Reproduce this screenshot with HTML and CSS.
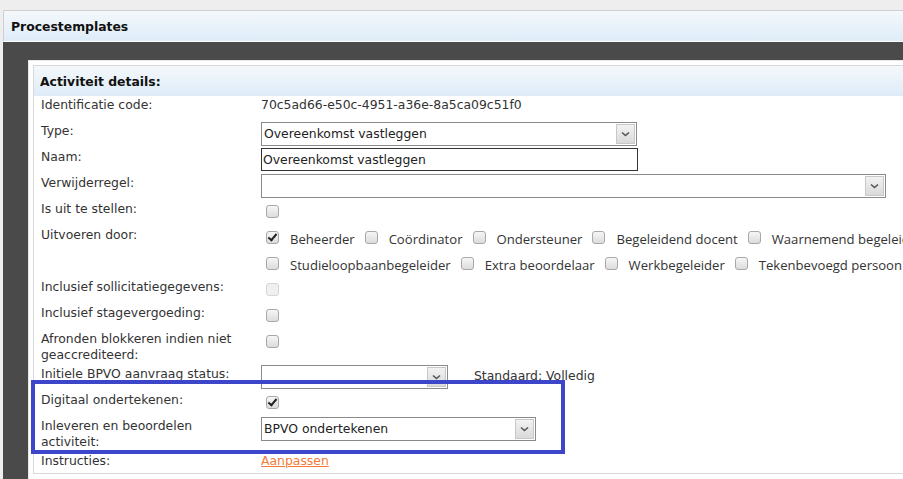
FILE: index.html
```html
<!DOCTYPE html>
<html lang="nl">

<head>
    <meta charset="UTF-8">
    <meta name="viewport" content="width=device-width, initial-scale=1.0">
    <title>Procestemplates</title>
    <link rel="stylesheet" href="styles.css">
</head>

<body>
    <div class="topbar">Procestemplates</div>
    <div class="stage">
        <div class="card">
            <div class="box">
                <div class="box-head">Activiteit details:</div>
                <div class="fields">
                    <div class="row">
                        <div class="lbl">Identificatie code:</div>
                        <div class="val">70c5ad66-e50c-4951-a36e-8a5ca09c51f0</div>
                    </div>
                    <div class="row">
                        <div class="lbl">Type:</div>
                        <div class="select w376"><span class="sel-text">Overeenkomst vastleggen</span><span class="sel-btn"><svg width="9" height="6" viewBox="0 0 9 6"><path d="M1 1.5 L4.5 4.5 L8 1.5" fill="none" stroke="#555" stroke-width="1.6"/></svg></span></div>
                    </div>
                    <div class="row">
                        <div class="lbl">Naam:</div>
                        <div class="input">Overeenkomst vastleggen</div>
                    </div>
                    <div class="row">
                        <div class="lbl">Verwijderregel:</div>
                        <div class="select w625"><span class="sel-text"></span><span class="sel-btn"><svg width="9" height="6" viewBox="0 0 9 6"><path d="M1 1.5 L4.5 4.5 L8 1.5" fill="none" stroke="#555" stroke-width="1.6"/></svg></span></div>
                    </div>
                    <div class="row cbrow">
                        <div class="lbl">Is uit te stellen:</div>
                        <span class="cb"></span>
                    </div>
                    <div class="row">
                        <div class="lbl">Uitvoeren door:</div>
                        <div class="options">
                            <div class="opt-line">
                                <span class="cb checked"></span><span class="opt">Beheerder</span>
                                <span class="cb"></span><span class="opt">Coördinator</span>
                                <span class="cb"></span><span class="opt">Ondersteuner</span>
                                <span class="cb"></span><span class="opt">Begeleidend docent</span>
                                <span class="cb"></span><span class="opt">Waarnemend begeleider</span>
                            </div>
                            <div class="opt-line">
                                <span class="cb"></span><span class="opt">Studieloopbaanbegeleider</span>
                                <span class="cb"></span><span class="opt">Extra beoordelaar</span>
                                <span class="cb"></span><span class="opt">Werkbegeleider</span>
                                <span class="cb"></span><span class="opt">Tekenbevoegd persoon</span>
                            </div>
                        </div>
                    </div>
                    <div class="row cbrow">
                        <div class="lbl">Inclusief sollicitatiegegevens:</div>
                        <span class="cb disabled"></span>
                    </div>
                    <div class="row cbrow">
                        <div class="lbl">Inclusief stagevergoeding:</div>
                        <span class="cb"></span>
                    </div>
                    <div class="row cbrow">
                        <div class="lbl">Afronden blokkeren indien niet geaccrediteerd:</div>
                        <span class="cb"></span>
                    </div>
                    <div class="row">
                        <div class="lbl">Initiele BPVO aanvraag status:</div>
                        <div class="select w187"><span class="sel-text"></span><span class="sel-btn"><svg width="9" height="6" viewBox="0 0 9 6"><path d="M1 1.5 L4.5 4.5 L8 1.5" fill="none" stroke="#555" stroke-width="1.6"/></svg></span></div>
                        <span class="hint">Standaard: Volledig</span>
                    </div>
                    <div class="highlight">
                        <div class="row cbrow">
                            <div class="lbl">Digitaal ondertekenen:</div>
                            <span class="cb checked"></span>
                        </div>
                        <div class="row">
                            <div class="lbl">Inleveren en beoordelen activiteit:</div>
                            <div class="select w275"><span class="sel-text">BPVO ondertekenen</span><span class="sel-btn"><svg width="9" height="6" viewBox="0 0 9 6"><path d="M1 1.5 L4.5 4.5 L8 1.5" fill="none" stroke="#555" stroke-width="1.6"/></svg></span></div>
                        </div>
                    </div>
                    <div class="row last">
                        <div class="lbl">Instructies:</div>
                        <a class="link" href="#">Aanpassen</a>
                    </div>
                </div>
            </div>
        </div>
    </div>
</body>

</html>
```

FILE: styles.css
```css
body {
    margin: 0;
    background-color: #eeeeee;
    font-family: "DejaVu Sans", Verdana, sans-serif;
    font-size: 12.4px;
    color: #333;
    overflow: hidden;
    height: 479px;
}

.topbar {
    margin: 10px 0 0 3px;
    height: 28px;
    line-height: 28px;
    padding: 2px 0 0 7px;
    border-top: 1px solid #cfcfcf;
    border-left: 1px solid #cfcfcf;
    border-bottom: 1px solid #fff;
    background: linear-gradient(#f4f8fb, #deecf8);
    font-weight: bold;
    color: #111;
}

.stage {
    margin-left: 3px;
    background-color: #4a4a4a;
    padding: 18px 0 0 25px;
    height: 500px;
}

.card {
    background-color: #fff;
    border-top: 1px solid #e8e8e8;
    border-left: 1px solid #e8e8e8;
    padding: 4px 0 20px 4px;
}

.box {
    border: 1px solid #d8d8d8;
    border-right: none;
    padding-bottom: 3px;
}

.box-head {
    height: 28px;
    line-height: 28px;
    padding: 2px 0 0 6px;
    background: linear-gradient(#f4f8fb, #deecf8);
    font-weight: bold;
    color: #111;
}

.fields {
    padding-left: 7px;
}

.row {
    display: flex;
    align-items: flex-start;
    min-height: 24px;
    padding: 0 0 2px;
}

.row.last {
    min-height: 18px;
    padding-bottom: 0;
}

.lbl {
    width: 200px;
    flex: none;
    padding-right: 20px;
    line-height: 16px;
    padding-top: 1px;
}

.val {
    line-height: 16px;
    padding-top: 1px;
}

.select {
    display: flex;
    height: 24px;
    box-sizing: border-box;
    border: 1px solid #8a8a8a;
    background: #fff;
}

.w376 { width: 376px; }
.w625 { width: 625px; }
.w187 { width: 187px; }
.w275 { width: 275px; }

.sel-text {
    flex: 1;
    line-height: 22px;
    padding-left: 2px;
    color: #222;
}

.sel-btn {
    width: 19px;
    margin: 1px;
    display: flex;
    align-items: center;
    justify-content: center;
    border: 1px solid #c8c8c8;
    background: linear-gradient(#f2f2f2, #dadada);
    box-sizing: border-box;
}

.input {
    width: 377px;
    height: 23px;
    box-sizing: border-box;
    border: 1px solid #333;
    line-height: 21px;
    padding-left: 1px;
    color: #222;
}

.cb {
    display: inline-block;
    flex: none;
    width: 13px;
    height: 13px;
    box-sizing: border-box;
    border: 1px solid #a8a8a8;
    border-radius: 3px;
    background: linear-gradient(#f6f6f6, #dcdcdc);
    position: relative;
}

.cbrow .cb {
    margin: 5px 0 0 5px;
}

.cb.checked::after {
    content: "";
    position: absolute;
    left: 3px;
    top: 0px;
    width: 3px;
    height: 7px;
    border: solid #222;
    border-width: 0 2px 2px 0;
    transform: rotate(40deg);
}

.cb.disabled {
    border-color: #d6d6d6;
    background: #f0f0f0;
}

.options {
    margin-left: 5px;
    margin-bottom: -2px;
    white-space: nowrap;
}

.opt-line {
    display: flex;
    align-items: center;
    height: 26px;
}

.opt-line .cb {
    margin-top: -3px;
}

.opt {
    font-family: "Open Sans", sans-serif;
    font-size: 13.1px;
    margin: 0 10px 0 11px;
    color: #333;
}

.hint {
    margin-left: 26px;
    line-height: 22px;
}

.highlight {
    position: relative;
}

.highlight::after {
    content: "";
    position: absolute;
    left: -10px;
    top: -11px;
    width: 526px;
    height: 66px;
    border: 4px solid #3d45c8;
}

.link {
    color: #f27a38;
    line-height: 16px;
    padding-top: 1px;
}
```
